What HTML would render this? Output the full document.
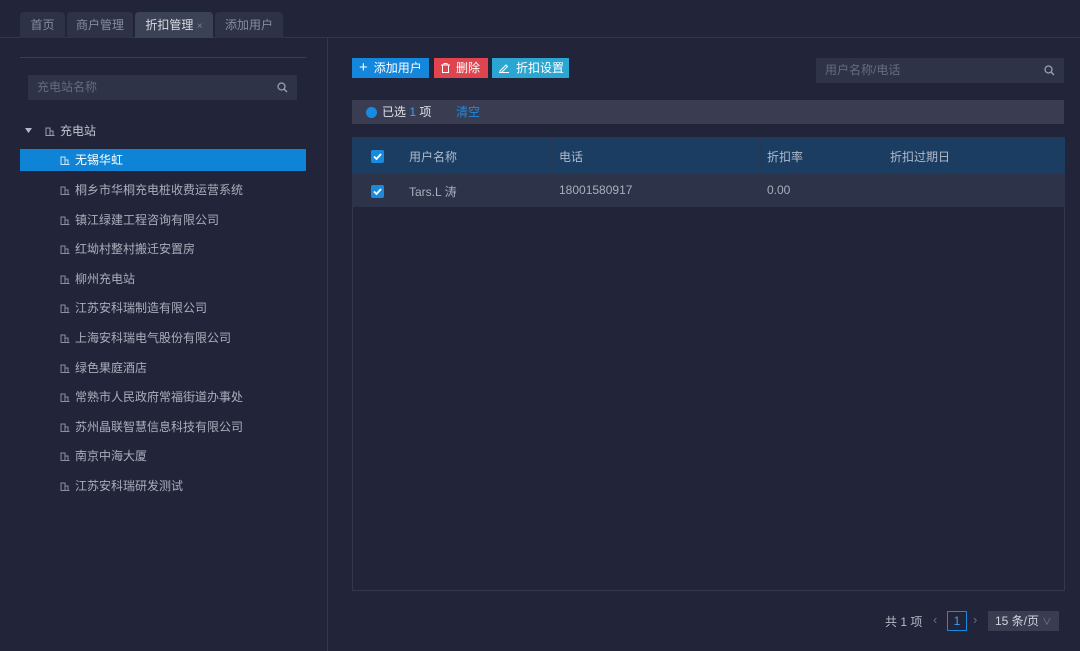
<!DOCTYPE html>
<html><head><meta charset="utf-8"><style>
*{margin:0;padding:0;box-sizing:border-box}
body{width:1080px;height:651px;background:#22253a;font-family:"Liberation Sans","Noto Sans CJK SC",sans-serif;font-size:12px;color:#c8ccd6;position:relative;overflow:hidden}
.a{position:absolute}
.tab{position:absolute;top:12px;height:26px;background:#2e3246;border-radius:4px 4px 0 0;color:#868c9e;line-height:26px;text-align:center;font-size:12px}
.row{position:absolute;left:60px;height:22px;line-height:22px;color:#a9aebb;font-size:12px;white-space:nowrap}
.ic{display:inline-block;width:10px;height:10px;margin-right:5px;vertical-align:-1px}
.btn{position:absolute;top:58px;height:20px;line-height:20px;color:#fff;font-size:12px;padding-left:7px}
.cb{position:absolute;width:13px;height:13px;background:#1a8ae0;border-radius:2px}
</style></head><body>
<div class="a" style="left:0;top:37px;width:1080px;height:1px;background:#33374b"></div>
<div class="tab" style="left:20px;width:45px">首页</div>
<div class="tab" style="left:67px;width:66px">商户管理</div>
<div class="tab" style="left:135px;width:78px;background:#3c4256;color:#d8dbe3">折扣管理 <span style="color:#7a8090;font-size:10px">×</span></div>
<div class="tab" style="left:215px;width:68px">添加用户</div>
<div class="a" style="left:327px;top:38px;width:1px;height:613px;background:#34384c"></div>
<div class="a" style="left:20px;top:57px;width:286px;height:1px;background:#3a3e52"></div>
<div class="a" style="left:28px;top:75px;width:269px;height:25px;background:#2f3347;color:#666c7e;line-height:25px;padding-left:9px">充电站名称
<svg class="a" style="right:9px;top:7px" width="11" height="11" viewBox="0 0 11 11"><circle cx="4.5" cy="4.5" r="3.5" fill="none" stroke="#9aa0ae" stroke-width="1.3"/><path d="M7 7l3 3" stroke="#9aa0ae" stroke-width="1.4"/></svg></div>
<svg class="a" style="left:25px;top:128px" width="7" height="5"><path d="M0 0h7L3.5 5z" fill="#b4b9c6"/></svg>
<div class="row" style="left:45px;top:120px;color:#c0c4ce"><svg class="ic" viewBox="0 0 10 10"><path d="M1 9V2h4v7M5 5h3v4M0.5 9.5h9" fill="none" stroke="#9aa0ae"/></svg>充电站</div>
<div class="a" style="left:20px;top:149px;width:286px;height:22px;background:#0f84d6"></div>
<div class="row" style="top:149px;color:#fff"><svg class="ic" viewBox="0 0 10 10"><path d="M1 9V2h4v7M5 5h3v4M0.5 9.5h9" fill="none" stroke="#cfe6f8"/></svg>无锡华虹</div>
<div id="tree"></div>
<script>
var n=["桐乡市华桐充电桩收费运营系统","镇江绿建工程咨询有限公司","红坳村整村搬迁安置房","柳州充电站","江苏安科瑞制造有限公司","上海安科瑞电气股份有限公司","绿色果庭酒店","常熟市人民政府常福街道办事处","苏州晶联智慧信息科技有限公司","南京中海大厦","江苏安科瑞研发测试"];
var h="";n.forEach(function(t,i){h+='<div class="row" style="top:'+(179+i*29.6)+'px"><svg class="ic" viewBox="0 0 10 10"><path d="M1 9V2h4v7M5 5h3v4M0.5 9.5h9" fill="none" stroke="#8a90a0"/></svg>'+t+'</div>'});
document.getElementById('tree').innerHTML=h;
</script>
<div class="btn" style="left:352px;width:77px;background:#1487dc"><b style="font-size:15px;font-weight:normal;margin-right:6px;line-height:18px">+</b>添加用户</div>
<div class="btn" style="left:434px;width:54px;background:#e0454f"><svg style="vertical-align:-1px;margin-right:6px" width="9" height="10" viewBox="0 0 9 10"><path d="M0 2h9M3 2V0.5h3V2M1.5 2v7.5h6V2" fill="none" stroke="#fff"/></svg>删除</div>
<div class="btn" style="left:492px;width:77px;background:#2ba6d2"><svg style="vertical-align:-1px;margin-right:6px" width="11" height="10" viewBox="0 0 11 10"><path d="M1 8l6-6 1.5 1.5-6 6H1zM0 9.5h10" fill="none" stroke="#fff"/></svg>折扣设置</div>
<div class="a" style="left:816px;top:58px;width:248px;height:25px;background:#2f3347;color:#666c7e;line-height:25px;padding-left:9px">用户名称/电话
<svg class="a" style="right:9px;top:7px" width="11" height="11" viewBox="0 0 11 11"><circle cx="4.5" cy="4.5" r="3.5" fill="none" stroke="#9aa0ae" stroke-width="1.3"/><path d="M7 7l3 3" stroke="#9aa0ae" stroke-width="1.4"/></svg></div>
<div class="a" style="left:352px;top:100px;width:712px;height:24px;background:#3a3d52;line-height:24px;color:#e0e3ea">
<span class="a" style="left:14px;top:7px;width:11px;height:11px;border-radius:50%;background:#1a8ae0"></span>
<span class="a" style="left:30px">已选 <span style="color:#3ea0f0">1</span> 项</span>
<span class="a" style="left:104px;color:#1a8ae0">清空</span></div>
<div class="a" style="left:352px;top:137px;width:713px;height:454px;border:1px solid #34384c;background:#22253a"></div>
<div class="a" style="left:352px;top:137px;width:713px;height:37px;background:#1c3d62"></div>
<div class="a" style="left:352px;top:174px;width:713px;height:33px;background:#2d3449"></div>
<div class="a" style="left:550px;top:137px;width:1px;height:70px;background:#2a3550"></div>
<div class="a" style="left:760px;top:137px;width:1px;height:70px;background:#2a3550"></div>
<div class="cb" style="left:371px;top:150px"></div>
<div class="cb" style="left:371px;top:185px"></div>
<svg class="a" style="left:371px;top:150px" width="13" height="13"><path d="M3 6.5l2.5 2.5 4.5-5" fill="none" stroke="#fff" stroke-width="1.8"/></svg>
<svg class="a" style="left:371px;top:185px" width="13" height="13"><path d="M3 6.5l2.5 2.5 4.5-5" fill="none" stroke="#fff" stroke-width="1.8"/></svg>
<div class="a" style="left:409px;top:148px;color:#b0bacb">用户名称</div>
<div class="a" style="left:559px;top:148px;color:#b0bacb">电话</div>
<div class="a" style="left:767px;top:148px;color:#b0bacb">折扣率</div>
<div class="a" style="left:890px;top:148px;color:#b0bacb">折扣过期日</div>
<div class="a" style="left:409px;top:183px;color:#a9aebb">Tars.L 涛</div>
<div class="a" style="left:559px;top:183px;color:#a9aebb">18001580917</div>
<div class="a" style="left:767px;top:183px;color:#a9aebb">0.00</div>
<div class="a" style="left:885px;top:613px;color:#b4b9c6">共 1 项</div>
<div class="a" style="left:933px;top:612px;color:#6a7082;font-size:13px">‹</div>
<div class="a" style="left:947px;top:611px;width:20px;height:20px;border:1px solid #1a8ae0;color:#3ea0f0;text-align:center;line-height:18px">1</div>
<div class="a" style="left:973px;top:612px;color:#6a7082;font-size:13px">›</div>
<div class="a" style="left:988px;top:611px;width:71px;height:20px;background:#3a3d52;color:#d0d4dc;line-height:20px;padding-left:7px">15 条/页 <span style="color:#7a8090;font-size:9px">∨</span></div>
</body></html>
